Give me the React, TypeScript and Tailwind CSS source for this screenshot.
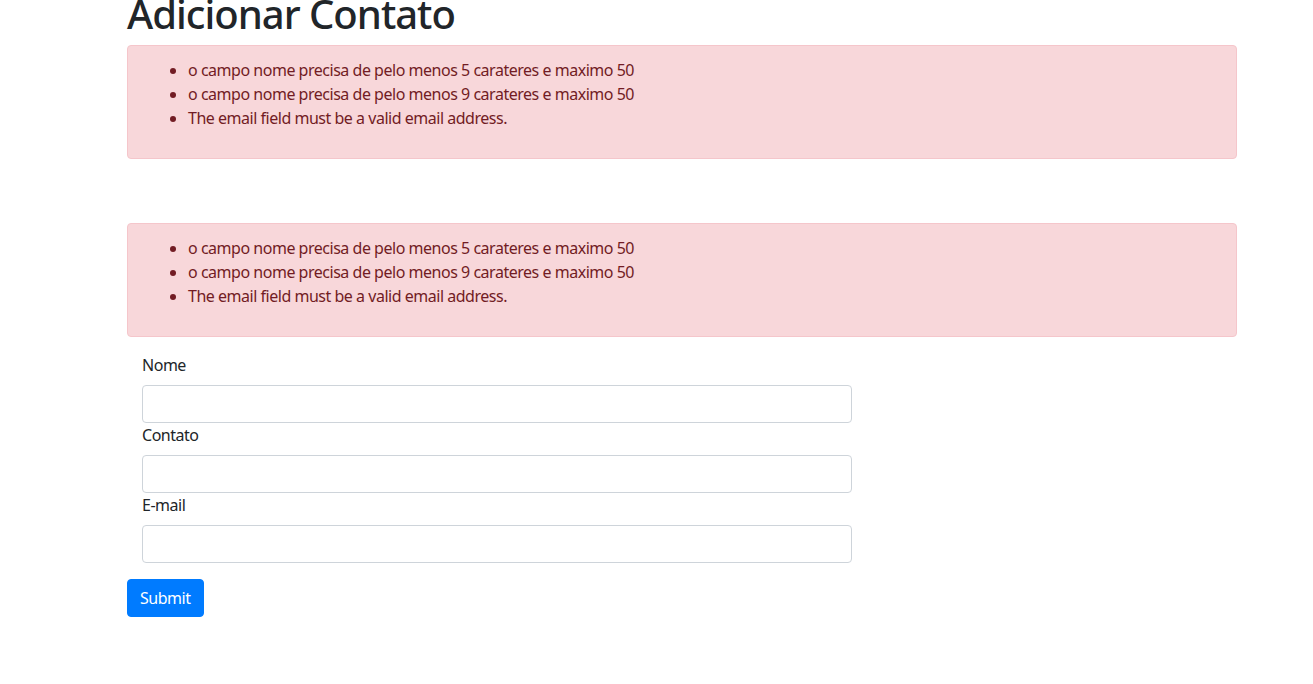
import React from "react";

const errors = [
  "o campo nome precisa de pelo menos 5 carateres e maximo 50",
  "o campo nome precisa de pelo menos 9 carateres e maximo 50",
  "The email field must be a valid email address.",
];

const ErrorAlert: React.FC = () => (
  <div className="rounded border border-[#f5c6cb] bg-[#f8d7da] px-5 py-3 text-[#721c24]">
    <ul className="mb-4 list-disc pl-10">
      {errors.map((e) => (
        <li key={e}>{e}</li>
      ))}
    </ul>
  </div>
);

const Field: React.FC<{ label: string; type?: string }> = ({ label, type = "text" }) => (
  <div>
    <label className="mb-2 block">{label}</label>
    <input
      type={type}
      className="block h-[38px] w-[710px] rounded border border-[#ced4da] bg-white px-3 py-1.5 text-[#495057] outline-none"
    />
  </div>
);

export default function App() {
  return (
    <div
      className="min-h-screen bg-white text-base leading-6 tracking-[-0.48px] text-[#212529]"
      style={{ fontFamily: '"Noto Sans", "Open Sans", sans-serif' }}
    >
      <div className="ml-[127px] w-[1110px]">
        <h1 className="mt-[-10px] mb-[7px] text-[40px] font-medium leading-[48px] tracking-[-1px]">
          Adicionar Contato
        </h1>
        <ErrorAlert />
        <div className="h-[64px]" />
        <ErrorAlert />
        <form className="mt-4 flex flex-col" onSubmit={(e) => e.preventDefault()}>
          <div className="px-[15px]">
            <Field label="Nome" />
            <Field label="Contato" />
            <Field label="E-mail" type="email" />
          </div>
          <div className="mt-4">
            <button
              type="submit"
              className="rounded border border-[#007bff] bg-[#007bff] px-3 py-1.5 text-white"
            >
              Submit
            </button>
          </div>
        </form>
      </div>
    </div>
  );
}
